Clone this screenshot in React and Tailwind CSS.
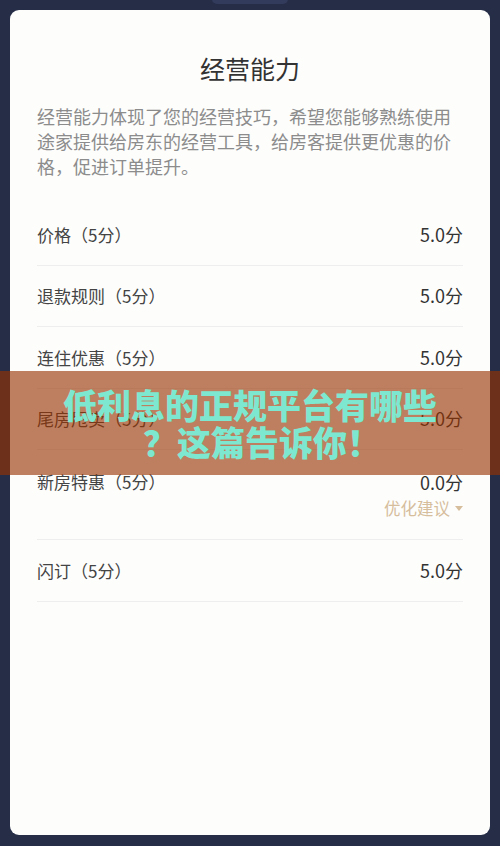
import React from 'react'

const rows = [
  { label: '价格（5分）', value: '5.0分' },
  { label: '退款规则（5分）', value: '5.0分' },
  { label: '连住优惠（5分）', value: '5.0分' },
  { label: '尾房甩卖（5分）', value: '5.0分' },
  { label: '新房特惠（5分）', value: '0.0分', tip: true },
  { label: '闪订（5分）', value: '5.0分' },
]

const font = { fontFamily: '"Noto Sans CJK SC", "Noto Sans", sans-serif' }

export default function App() {
  return (
    <div className="relative w-[500px] h-[846px] bg-[#252d47] px-[10px] pt-[10px] pb-[11px] overflow-hidden" style={font}>
      {/* faint notch at the top */}
      <div className="absolute top-[-6px] left-[212px] w-[76px] h-[10px] rounded-full bg-[#323b5c]" />

      <div className="h-full bg-[#fdfdfc] rounded-[9px] pt-[41px] px-[27px]">
        <h1 className="text-center text-[25px] leading-[34px] text-[#333333] font-normal">经营能力</h1>
        <p className="mt-[19px] text-[18px] leading-[25px] text-[#8c8c8c]">
          经营能力体现了您的经营技巧，希望您能够熟练使用途家提供给房东的经营工具，给房客提供更优惠的价格，促进订单提升。
        </p>

        <div className="mt-[25px]">
          {rows.map((row) =>
            row.tip ? (
              <div key={row.label} className="pt-[20px] pb-[20px] border-b border-[#eeeeee]">
                <div className="flex items-center justify-between h-[24px] text-[17px] text-[#444444]">
                  <span>{row.label}</span>
                  <span className="text-[18px] text-[#333333]">{row.value}</span>
                </div>
                <div className="mt-[3px] flex items-center justify-end h-[22px] text-[16.5px] text-[#d6bd9c]">
                  <span>优化建议</span>
                  <span className="ml-[5px] w-0 h-0 border-l-[4px] border-r-[4px] border-t-[5px] border-l-transparent border-r-transparent border-t-[#d6bd9c]" />
                </div>
              </div>
            ) : (
              <div key={row.label} className="flex items-center justify-between h-[61.5px] border-b border-[#eeeeee] text-[17px] text-[#444444]">
                <span>{row.label}</span>
                <span className="text-[18px] text-[#333333]">{row.value}</span>
              </div>
            )
          )}
        </div>
      </div>

      {/* overlay banner */}
      <div className="absolute left-0 top-[371px] w-[500px] h-[104px] bg-[rgba(151,50,0,0.62)] flex flex-col items-center justify-center">
        <div className="text-[34px] leading-[37px] font-black text-[#7de8cf] text-center">低利息的正规平台有哪些</div>
        <div className="pl-[24px] text-[34px] leading-[37px] font-black text-[#7de8cf] text-center">？这篇告诉你！</div>
      </div>
    </div>
  )
}
